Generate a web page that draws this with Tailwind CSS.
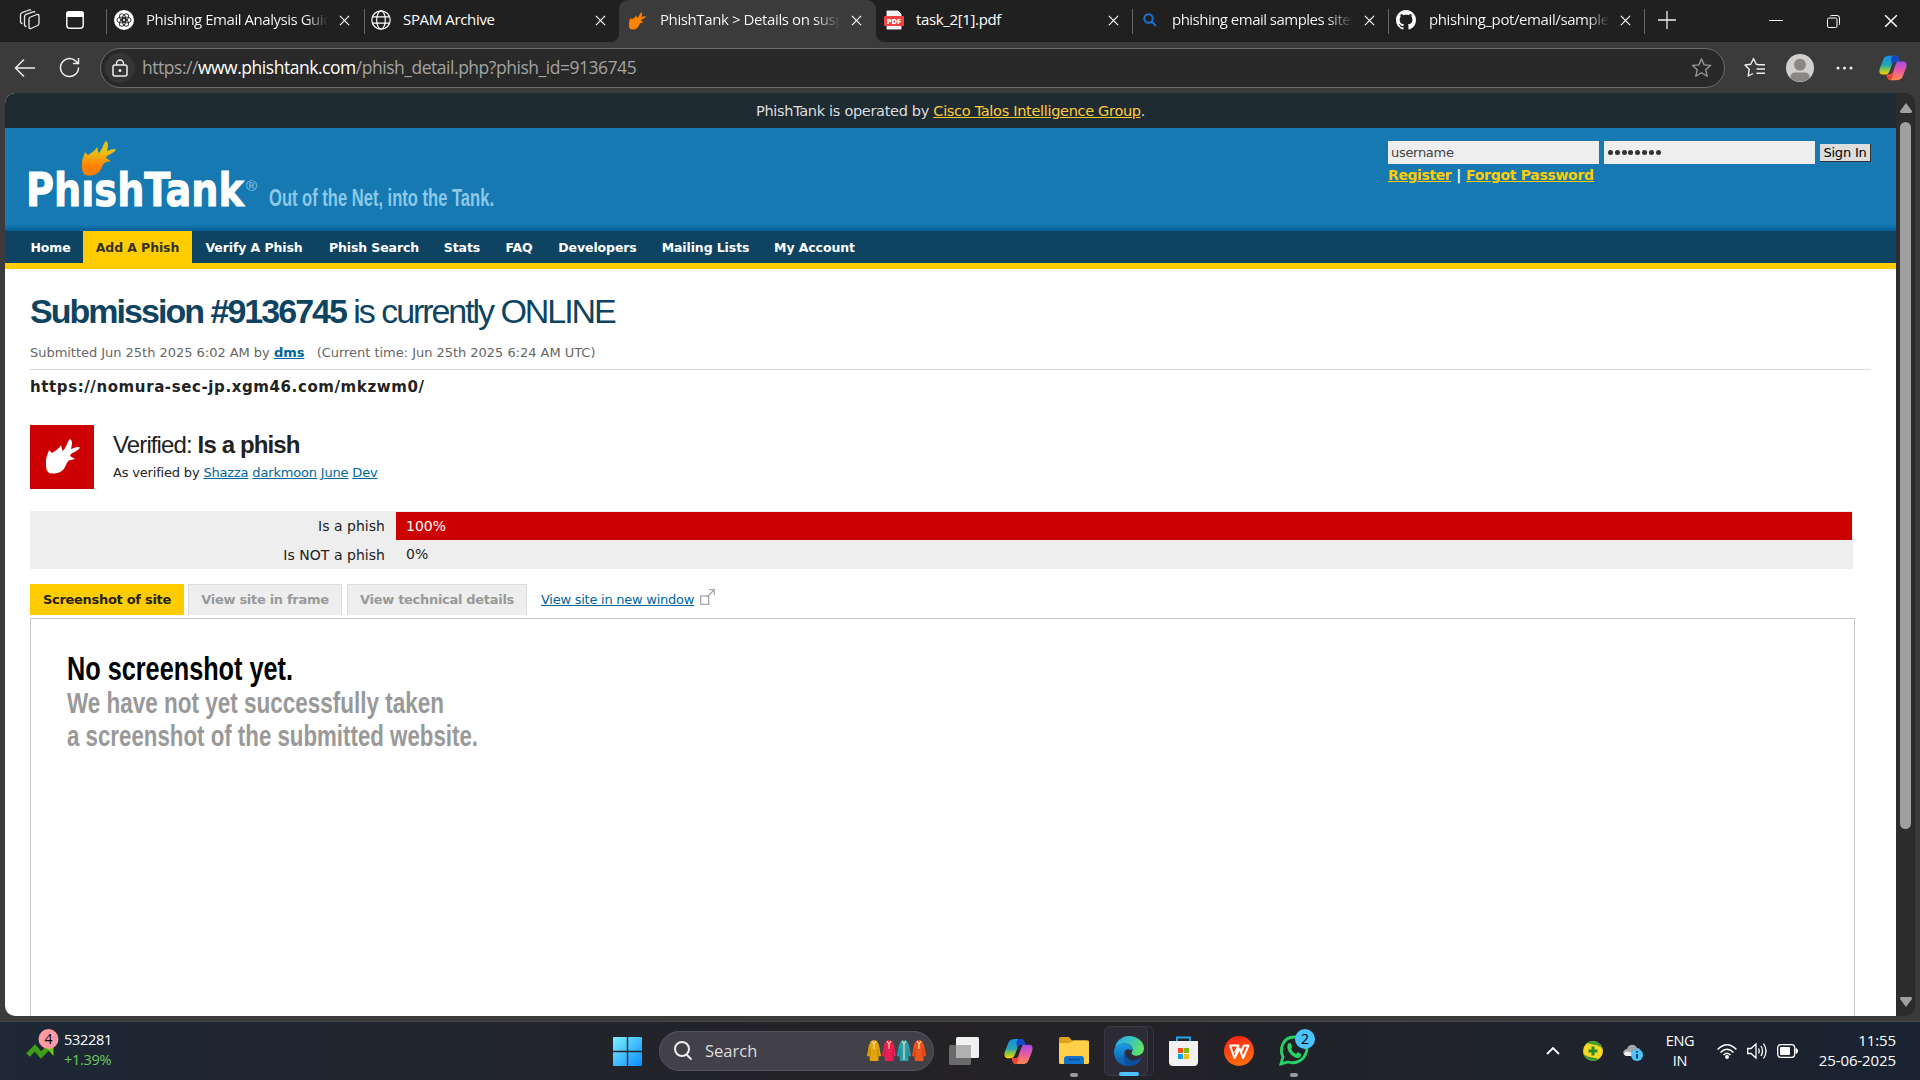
<!DOCTYPE html>
<html lang="en">
<head>
<meta charset="utf-8">
<title>PhishTank &gt; Details on suspected phish #9136745</title>
<script src="https://cdn.jsdelivr.net/npm/@tailwindcss/browser@4"></script>
</head>
<body class="w-[1920px] h-[1080px] overflow-hidden flex flex-col bg-[#3b3b3b] font-['Open_Sans',sans-serif]">

<svg class="absolute w-0 h-0">
  <defs>
    <symbol id="x" viewBox="0 0 12 12"><path d="M1 1L11 11M11 1L1 11" stroke="currentColor" stroke-width="1.3" fill="none"/></symbol>
    <symbol id="fish" viewBox="0 0 34 35"><path d="M0 24C0 17 2 15 3 11L6 14C9 12 13 10 15 6L16.500 12C20 10 21 3 24 0C27 2 26 6 25 10C28 9 31 7 34 8.500C32 12 28 13 25 15L24 17L29 20L23 21.500C20 24 20 28 17 31C13 35 5 35.500 2 33C0 31 0 27 0 24Z" fill="currentColor"/></symbol>
    <linearGradient id="cl" x1="0" y1="0" x2="0" y2="1"><stop offset="0" stop-color="#1592ea"/><stop offset=".5" stop-color="#25a5b5"/><stop offset=".75" stop-color="#8fc73e"/><stop offset="1" stop-color="#ffd000"/></linearGradient>
    <linearGradient id="cr" x1="0" y1="0" x2="0" y2="1"><stop offset="0" stop-color="#a44be8"/><stop offset=".5" stop-color="#ea5aa0"/><stop offset="1" stop-color="#ff8a4a"/></linearGradient>
    <symbol id="copilot" viewBox="0 0 30 30">
      <path d="M12 2H18C20 2 21 4 22 8H18C15 8 14 10 13 14L11 19C10 21 9 22 6 22H4C0 22 0 18 1 15L5 5C6 3 8 2 12 2Z" fill="url(#cl)"/>
      <path d="M15 2H18C20 2 21 4 22 8H18C16 8 15 9 14 11C12 7 13 3 15 2Z" fill="#1747c9"/>
      <path d="M18 28H12C10 28 9 26 8 22H11C14 22 15 20 16 16L18 11C19 8 20 8 23 8H26C30 8 30 12 29 15L25 25C24 27 22 28 18 28Z" fill="url(#cr)"/>
      <path d="M8 22H11C14 22 15 20 16 17L14 26C13 28 12 28.500 11 28C9.500 27 9 25 8 22Z" fill="#e8452c"/>
    </symbol>
  </defs>
</svg>

<!-- Tab strip -->
<div class="h-[42px] shrink-0 flex bg-[#3b3b3b] text-white text-[15px] leading-[39px]">
  <div class="w-[106px] flex items-start bg-[#202020]">
    <svg class="ml-[19px] mt-[9px] w-[22px] h-[22px]" viewBox="0 0 22 22" fill="none" stroke="#e8e8e8" stroke-width="1.3"><path d="M10 10Q10 8.500 11.500 8L18 5.500Q20 5 20 7V14Q20 16 18.500 16.500L12 19.500Q10 20 10 18Z"/><path d="M7.500 17.500Q5.500 17.500 5.500 15.500V8Q5.500 6 7 5.400L14 2.800Q15.700 2.500 16 3.500"/><path d="M3.500 14.500Q1.500 14.500 1.500 12.500V6Q1.500 4.200 3 3.600L10 1Q11.500 .6 12 1.500"/></svg>
    <svg class="ml-[25px] mt-[11px] w-[18px] h-[18px]" viewBox="0 0 18 18"><rect x=".8" y=".8" width="16.400" height="16.400" rx="3" fill="none" stroke="#f2f2f2" stroke-width="1.500"/><path d="M0 6V3Q0 0 3 0H15Q18 0 18 3V6Z" fill="#fff"/></svg>
  </div>
  <div class="w-[258px] flex bg-[#202020]">
    <i class="w-px h-[25px] mt-[9px] bg-[#666]"></i>
    <svg class="ml-[7px] mt-[10px] w-5 h-5 shrink-0" viewBox="0 0 20 20"><circle cx="10" cy="10" r="10" fill="#fff"/><g fill="none" stroke="#222" stroke-width=".9"><ellipse cx="10" cy="7.300" rx="2.800" ry="4.200" transform="rotate(30 10 10)"/><ellipse cx="10" cy="7.300" rx="2.800" ry="4.200" transform="rotate(90 10 10)"/><ellipse cx="10" cy="7.300" rx="2.800" ry="4.200" transform="rotate(150 10 10)"/><ellipse cx="10" cy="7.300" rx="2.800" ry="4.200" transform="rotate(210 10 10)"/><ellipse cx="10" cy="7.300" rx="2.800" ry="4.200" transform="rotate(270 10 10)"/><ellipse cx="10" cy="7.300" rx="2.800" ry="4.200" transform="rotate(330 10 10)"/></g></svg>
    <span class="ml-3 w-[182px] overflow-hidden whitespace-nowrap tracking-[-0.460px] bg-linear-to-r from-white from-88% to-transparent bg-clip-text text-transparent">Phishing Email Analysis Guid</span>
    <svg class="ml-[11px] mt-[15px] w-[11px] h-[11px]"><use href="#x"/></svg>
  </div>
  <div class="w-[255px] flex rounded-br-lg bg-[#202020]">
    <i class="w-px h-[25px] mt-[9px] bg-[#666]"></i>
    <svg class="ml-[6px] mt-[10px] w-5 h-5 shrink-0" viewBox="0 0 20 20" fill="none" stroke="#fff" stroke-width="1.200"><circle cx="10" cy="10" r="9.200"/><ellipse cx="10" cy="10" rx="4.300" ry="9.200"/><path d="M1.500 6.800H18.500M1.500 13.200H18.500"/></svg>
    <span class="ml-3 w-[192px] tracking-[-0.35px]">SPAM Archive</span>
    <svg class="mt-[15px] w-[11px] h-[11px]"><use href="#x"/></svg>
  </div>
  <div class="w-[257px] flex bg-[#202020]"><div class="w-full flex bg-[#3b3b3b] rounded-t-[9px]">
    <svg class="ml-[10px] mt-[12px] w-[17px] h-[18px] shrink-0 text-[#ff8200]"><use href="#fish"/></svg>
    <span class="ml-[14px] w-[181px] overflow-hidden whitespace-nowrap tracking-[-0.400px] bg-linear-to-r from-white from-85% to-transparent bg-clip-text text-transparent">PhishTank &gt; Details on susp</span>
    <svg class="ml-[10px] mt-[15px] w-[11px] h-[11px]"><use href="#x"/></svg>
  </div></div>
  <div class="w-[256px] flex rounded-bl-lg bg-[#202020]">
    <svg class="ml-[8px] mt-[10px] w-[20px] h-[20px] shrink-0" viewBox="0 0 20 20"><path d="M2 0H14L18 4V20H2Z" fill="#f2f2f2" stroke="#111"/><rect y="6" width="20" height="10" rx="1" fill="#f7403f"/><text x="10" y="13.700" font-size="7.500" font-weight="800" fill="#fff" text-anchor="middle" font-family="Open Sans">PDF</text></svg>
    <span class="ml-3 w-[192px] tracking-[-0.350px]">task_2[1].pdf</span>
    <svg class="mt-[15px] w-[11px] h-[11px]"><use href="#x"/></svg>
  </div>
  <div class="w-[256px] flex bg-[#202020]">
    <i class="w-px h-[25px] mt-[9px] bg-[#666]"></i>
    <svg class="ml-[10px] mt-[13px] w-[14px] h-[14px] shrink-0" viewBox="0 0 14 14" fill="none" stroke="#1374d0" stroke-width="2"><circle cx="5.500" cy="5.500" r="4.200"/><path d="M8.500 8.500L13 13"/></svg>
    <span class="ml-[15px] w-[181px] overflow-hidden whitespace-nowrap tracking-[-0.520px] bg-linear-to-r from-white from-85% to-transparent bg-clip-text text-transparent">phishing email samples sites</span>
    <svg class="ml-[11px] mt-[15px] w-[11px] h-[11px]"><use href="#x"/></svg>
  </div>
  <div class="w-[256px] flex bg-[#202020]">
    <i class="w-px h-[25px] mt-[9px] bg-[#666]"></i>
    <svg class="ml-[7px] mt-[10px] w-5 h-5 shrink-0" viewBox="0 0 16 16" fill="#fff"><path d="M8 0C3.580 0 0 3.580 0 8c0 3.540 2.290 6.530 5.470 7.590.4.070.55-.17.55-.38 0-.19-.01-.82-.01-1.490-2.010.37-2.530-.49-2.690-.94-.09-.23-.48-.94-.82-1.130-.28-.15-.68-.52-.01-.53.63-.01 1.080.58 1.230.82.72 1.210 1.870.87 2.330.66.070-.52.28-.87.51-1.070-1.780-.2-3.640-.89-3.640-3.950 0-.87.31-1.590.82-2.150-.08-.2-.36-1.020.08-2.120 0 0 .67-.21 2.200.82.64-.18 1.320-.27 2-.27s1.360.09 2 .27c1.530-1.040 2.200-.82 2.200-.82.44 1.100.16 1.920.08 2.120.51.56.82 1.270.82 2.150 0 3.070-1.870 3.750-3.650 3.950.29.25.54.73.54 1.480 0 1.070-.01 1.930-.01 2.200 0 .21.15.46.55.38A8 8 0 0 0 16 8c0-4.420-3.580-8-8-8"/></svg>
    <span class="ml-[13px] w-[180px] overflow-hidden whitespace-nowrap tracking-[-0.400px] bg-linear-to-r from-white from-88% to-transparent bg-clip-text text-transparent">phishing_pot/email/sample</span>
    <svg class="ml-[11px] mt-[15px] w-[11px] h-[11px]"><use href="#x"/></svg>
  </div>
  <div class="flex-1 flex bg-[#202020]">
    <i class="w-px h-[25px] mt-[9px] bg-[#666]"></i>
    <svg class="ml-[13px] mt-[11px] w-[18px] h-[18px]" viewBox="0 0 18 18"><path d="M9 0V18M0 9H18" stroke="#eee" stroke-width="1.300"/></svg>
    <svg class="ml-[93px] mt-[14px] w-[14px] h-[14px]" viewBox="0 0 14 14"><path d="M0 6.500H14" stroke="#fff"/></svg>
    <svg class="ml-[44px] mt-[15px] w-[13px] h-[13px]" viewBox="0 0 13 13" fill="none" stroke="#fff"><rect x=".5" y="3" width="9.500" height="9.500" rx="1.500"/><path d="M3 1.200Q3.500 .5 4.500 .5H10Q12.500 .5 12.500 3V8.500Q12.500 9.500 11.800 10"/></svg>
    <svg class="ml-[44px] mt-[14px] w-[14px] h-[14px]"><use href="#x"/></svg>
  </div>
</div>

<!-- Toolbar -->
<div class="h-[51px] shrink-0 flex items-center bg-[#3b3b3b]">
  <svg class="ml-[14px] w-[22px] h-[20px]" viewBox="0 0 22 20" fill="none" stroke="#eee" stroke-width="1.500"><path d="M21 10H1.500M10 1.500L1.500 10L10 18.500"/></svg>
  <svg class="ml-[23px] w-[21px] h-[21px]" viewBox="0 0 21 21" fill="none" stroke="#eee" stroke-width="1.500"><path d="M19.500 10.500A9 9 0 1 1 16.500 3.800L19 6.200M19.500 1V6.500H14"/></svg>
  <div class="ml-[20px] w-[1625px] h-10 rounded-full border border-[#6b6b6b] bg-[#292929] flex items-center">
    <div class="ml-[4px] size-[30px] rounded-full bg-[#353535] flex items-center justify-center"><svg class="w-4 h-[18px]" viewBox="0 0 16 18" fill="none" stroke="#eee" stroke-width="1.500"><rect x="1" y="6" width="14" height="11" rx="2"/><path d="M4.500 6V4.500A3.500 3.500 0 0 1 11.500 4.500V6"/><circle cx="8" cy="11.500" r=".8" fill="#eee"/></svg></div>
    <div class="ml-[7px] w-[1549px] text-[17.500px] tracking-[-0.470px] text-[#a3a3a3] whitespace-nowrap">https://<span class="text-white">www.phishtank.com</span>/phish_detail.php?phish_id=9136745</div>
    <svg class="w-[21px] h-[21px]" viewBox="0 0 24 24" fill="none" stroke="#999" stroke-width="1.500"><path d="M12 2L15 9L22.500 9.500L16.800 14.500L18.500 22L12 18L5.500 22L7.200 14.500L1.500 9.500L9 9Z" stroke-linejoin="round"/></svg>
  </div>
  <svg class="ml-[19px] w-[22px] h-[21px]" viewBox="0 0 22 21" fill="none" stroke="#eee" stroke-width="1.400" stroke-linejoin="round"><path d="M14 7.500L12.300 7.200L9.500 1.500L6.800 7.200L1 8L5.200 12.300L4.200 19L9 16.500M14 7.800H21M12.500 12H21M12.500 16.200H21"/></svg>
  <svg class="ml-[20px] size-7" viewBox="0 0 28 28"><circle cx="14" cy="14" r="14" fill="#d2d0ce"/><circle cx="14" cy="10.800" r="6" fill="#8a8886"/><path d="M4.500 24Q4 18.500 9 18.500H19Q24 18.500 23.500 24A14 14 0 0 1 4.500 24Z" fill="#8a8886"/></svg>
  <svg class="ml-[22px] w-[17px] h-[4px]" viewBox="0 0 17 4" fill="#eee"><circle cx="2" cy="2" r="1.500"/><circle cx="8.500" cy="2" r="1.500"/><circle cx="15" cy="2" r="1.500"/></svg>
  <svg class="ml-[26px] size-7"><use href="#copilot"/></svg>
</div>

<!-- Page viewport -->
<div class="h-[923px] ml-[5px] w-[1910px] shrink-0 flex rounded-[10px] overflow-hidden bg-[#2c2c2c] font-['DejaVu_Sans',sans-serif]">
  <div class="w-[1891px] bg-white text-[#222] flex flex-col">
    <div class="h-[35px] shrink-0 bg-[#1f2b33] text-[#ddd] text-[14.500px] leading-[36px] text-center tracking-[-0.310px]">PhishTank is operated by <span class="text-[#fc3] underline">Cisco Talos Intelligence Group</span>.</div>
    <div class="h-[103px] shrink-0 flex justify-between bg-linear-to-b from-[#1679b2] from-94% to-[#045c93]">
      <svg class="w-[520px] h-[100px]" viewBox="5 128 520 100" role="img">
        <defs><linearGradient id="fire" x1="0" y1="0" x2="0" y2="1"><stop offset=".3" stop-color="#e8c117"/><stop offset=".75" stop-color="#ff7f00"/></linearGradient></defs>
        <text x="26" y="206" font-family="DejaVu Sans" font-weight="700" font-size="47" fill="#fff" stroke="#fff" stroke-width="1" textLength="218" lengthAdjust="spacingAndGlyphs">PhıshTank</text>
        <path transform="translate(82 141)" d="M0 24C0 17 2 15 3 11L6 14C9 12 13 10 15 6L16.500 12C20 10 21 3 24 0C27 2 26 6 25 10C28 9 31 7 34 8.500C32 12 28 13 25 15L24 17L29 20L23 21.500C20 24 20 28 17 31C13 35 5 35.500 2 33C0 31 0 27 0 24Z" fill="url(#fire)"/>
        <text x="246" y="191" font-family="Liberation Sans" font-size="15" fill="#8cc8e8">®</text>
        <text x="269" y="206" font-family="Liberation Sans" font-weight="700" font-size="23" fill="#8cc8e8" textLength="225" lengthAdjust="spacingAndGlyphs">Out of the Net, into the Tank.</text>
      </svg>
      <div class="w-[508px] pt-[13px] text-[13px]">
        <div class="flex items-start">
          <div class="w-[211px] h-[23px] bg-[#eee] pl-[3px] leading-[23px] text-[#444] tracking-[-0.300px]">username</div>
          <div class="ml-[5px] w-[211px] h-[23px] bg-[#eee] pl-1 flex items-center gap-[1.800px]"><i class="size-[5px] rounded-full bg-[#333]"></i><i class="size-[5px] rounded-full bg-[#333]"></i><i class="size-[5px] rounded-full bg-[#333]"></i><i class="size-[5px] rounded-full bg-[#333]"></i><i class="size-[5px] rounded-full bg-[#333]"></i><i class="size-[5px] rounded-full bg-[#333]"></i><i class="size-[5px] rounded-full bg-[#333]"></i><i class="size-[5px] rounded-full bg-[#333]"></i></div>
          <div class="ml-[5px] mt-[3px] w-[51px] h-[18px] bg-[#ddd] border-r border-b border-[#333] text-center leading-[17px] text-black whitespace-nowrap tracking-[-0.200px]">Sign In</div>
        </div>
        <div class="mt-[2px] text-[14px] font-bold text-white leading-[18px] whitespace-nowrap tracking-[-0.400px] flex gap-[5px]"><span class="text-[#fc0] underline">Register</span><span>|</span><span class="text-[#fc0] underline tracking-[-0.300px]">Forgot Password</span></div>
      </div>
    </div>
    <div class="h-[38px] shrink-0 bg-[#0e4462] border-b-[6px] border-[#fc0] pl-[13px] flex text-white font-bold text-[12.500px] leading-[33px] tracking-[-0.100px] whitespace-nowrap">
      <span class="w-[65px] text-center">Home</span><span class="w-[109px] h-8 text-center bg-[#fc0] text-[#333]">Add A Phish</span><span class="w-[124px] text-center">Verify A Phish</span><span class="w-[116px] text-center">Phish Search</span><span class="w-[60px] text-center">Stats</span><span class="w-[54px] text-center">FAQ</span><span class="w-[103px] text-center">Developers</span><span class="w-[113px] text-center">Mailing Lists</span><span class="w-[105px] text-center">My Account</span>
    </div>
    <div class="pl-[25px] pr-[25px] flex flex-col">
      <h1 class="mt-[22px] h-[41px] leading-[41px] font-['Liberation_Sans',sans-serif] text-[34px] tracking-[-2.060px] text-[#0e4462]"><b class="tracking-[-1.970px]">Submission #9136745</b> is currently ONLINE</h1>
      <div class="h-[38px] border-b border-[#d8d8d8] pt-[11px] text-[13px] leading-[20px] text-[#666] tracking-[-0.030px] whitespace-pre">Submitted Jun 25th 2025 6:02 AM by <b class="text-[#069] underline">dms</b>   (Current time: Jun 25th 2025 6:24 AM UTC)</div>
      <div class="mt-[7px] h-5 leading-5 text-[15px] font-bold tracking-[0.600px]">https://nomura-sec-jp.xgm46.com/mkzwm0/</div>
      <div class="mt-[28px] flex h-16">
        <div class="size-16 bg-[#c00] pl-[16px] pt-[14px] text-white"><svg class="w-[34px] h-[35px]"><use href="#fish"/></svg></div>
        <div class="ml-[19px]">
          <h3 class="mt-[5px] h-[30px] leading-[30px] font-['Liberation_Sans',sans-serif] text-[24px] tracking-[-0.880px]">Verified: <b>Is a phish</b></h3>
          <p class="mt-[3px] text-[13px] leading-5 tracking-[-0.180px]">As verified by <span class="text-[#069] underline">Shazza</span> <span class="text-[#069] underline">darkmoon</span> <span class="text-[#069] underline">June</span> <span class="text-[#069] underline">Dev</span></p>
        </div>
      </div>
      <div class="mt-[22px] w-[1823px] h-[58px] bg-[#eee] pt-px pr-px text-[14px] leading-7 tracking-[0.030px]">
        <div class="flex"><span class="w-[355px] text-right">Is a phish</span><span class="ml-[11px] flex-1 bg-[#c00] text-white pl-[10px]">100%</span></div>
        <div class="flex leading-[30px]"><span class="w-[355px] text-right">Is NOT a phish</span><span class="ml-[11px] pl-[10px] leading-7">0%</span></div>
      </div>
      <div class="mt-[15px] flex h-[31px] text-[13px] leading-[31px] font-bold text-center tracking-[-0.300px] whitespace-nowrap">
        <span class="w-[154px] bg-[#fc0]">Screenshot of site</span>
        <span class="ml-1 w-[154px] bg-[#eee] border border-b-0 border-[#ddd] text-[#999] leading-[29px]">View site in frame</span>
        <span class="ml-[5px] w-[180px] bg-[#eee] border border-b-0 border-[#ddd] text-[#999] leading-[29px]">View technical details</span>
        <span class="ml-[13px] w-[155px] font-normal text-[#069] underline tracking-[-0.250px]">View site in new window</span>
        <svg class="ml-[5px] mt-[5px] w-[15px] h-4" viewBox="0 0 15 16" fill="none" stroke="#aaa" stroke-width="1.300"><rect x=".7" y="7" width="8" height="8.300"/><path d="M7 8L14 1M9 .7H14.300V6"/></svg>
      </div>
      <div class="mt-[3px] w-[1825px] h-[420px] border border-[#c8c8c8]">
        <svg class="ml-[30px] mt-[25px] w-[440px] h-[110px]" viewBox="61 644 440 110" font-family="Liberation Sans" font-weight="700">
          <text x="67" y="680" font-size="33" textLength="226" lengthAdjust="spacingAndGlyphs" fill="#000">No screenshot yet.</text>
          <text x="67" y="713" font-size="30" textLength="377" lengthAdjust="spacingAndGlyphs" fill="#999">We have not yet successfully taken</text>
          <text x="67" y="746" font-size="30" textLength="411" lengthAdjust="spacingAndGlyphs" fill="#999">a screenshot of the submitted website.</text>
        </svg>
      </div>
    </div>
  </div>
  <div class="w-[19px] flex flex-col items-center">
    <svg class="mt-[10px] w-3 h-[10px]" viewBox="0 0 12 10"><path d="M6 0L12 8Q12 10 11 10H1Q0 10 0 8Z" fill="#a0a0a0"/></svg>
    <div class="mt-[9px] w-[11px] h-[707px] rounded-full bg-[#9f9f9f]"></div>
    <svg class="mt-[168px] w-3 h-[10px]" viewBox="0 0 12 10"><path d="M6 10L12 2Q12 0 11 0H1Q0 0 0 2Z" fill="#a0a0a0"/></svg>
  </div>
</div>

<!-- Taskbar -->
<div class="mt-[5px] h-[59px] shrink-0 flex items-center border-t border-[#474747] bg-linear-to-r from-[#1d2735] via-[#242225] to-[#1a2331] text-white">
  <svg class="ml-[26px] -mt-[7px] w-[34px] h-[40px]" viewBox="26 1027 34 40"><path d="M28 1054L35 1047L41 1054L51 1044" stroke="#3f9d16" stroke-width="5" fill="none"/><path d="M43 1043H53.500V1055Z" fill="#6cc814"/><circle cx="48.500" cy="1038" r="10" fill="#ff99a4"/><text x="48.500" y="1043" font-size="14" text-anchor="middle" font-family="Open Sans">4</text></svg>
  <div class="ml-[4px] -mt-[3px] w-[549px] text-[14.500px] leading-5 tracking-[-0.300px]"><div>532281</div><div class="text-[#6ccb5f]">+1.39%</div></div>
  <svg class="w-[29px] h-[29px]" viewBox="0 0 29 29"><defs><linearGradient id="win" x1="0" y1="0" x2="1" y2="1"><stop stop-color="#7df0ff"/><stop offset="1" stop-color="#0a8cff"/></linearGradient></defs><path d="M0 1Q0 0 1 0H13.800V13.800H0ZM15.200 0H28Q29 0 29 1V13.800H15.200ZM0 15.200H13.800V29H1Q0 29 0 28ZM15.200 15.200H29V28Q29 29 28 29H15.200Z" fill="url(#win)"/></svg>
  <div class="ml-[17px] w-[275px] h-10 rounded-full bg-[#424147] border border-[#55555b] flex items-center">
    <svg class="ml-[13px] w-5 h-[20px]" viewBox="0 0 20 20" fill="none" stroke="#eee" stroke-width="2"><circle cx="9" cy="8" r="7"/><path d="M13.500 13.500L18.500 18.500"/></svg>
    <span class="ml-[12px] w-[162px] text-[16.500px] text-[#ddd]">Search</span>
    <svg class="w-[60px] h-[22px]" viewBox="0 0 60 22"><defs><path id="kurta" d="M4 1L7 0L10 1L12 5L14 16L11.500 16.500L11.500 21H3L2.500 16.500L0 16L2 5Z"/></defs><use href="#kurta" fill="#e3a50d"/><use href="#kurta" x="15" fill="#e91e55"/><use href="#kurta" x="30" fill="#2b9fb0"/><use href="#kurta" x="45" fill="#f0521d"/><path d="M5 1L7 4L9 1M7 4V9M20 1L22 4L24 1M22 4V9M35 1L37 4L39 1M37 4V20M50 1L52 4L54 1M52 4V9" fill="none" stroke="#ffe0a0" stroke-width="1.100"/><path d="M3 9V17M11 9V17M18 9V17M26 9V17M33 9V17M41 9V17M48 9V17M56 9V17" stroke="#000" stroke-opacity=".25" stroke-width=".8"/></svg>
  </div>
  <svg class="ml-[15px] w-[30px] h-[28px]" viewBox="0 0 30 28"><rect x="7" width="23" height="21" rx="1.500" fill="#f1f1f1"/><rect y="8" width="22" height="20" rx="1.500" fill="#6a6a6c"/><rect x="7" y="8" width="15" height="13" fill="#b0b0b0"/></svg>
  <svg class="ml-[25px] size-[29px]"><use href="#copilot"/></svg>
  <div class="ml-[26px] w-[30px] h-[52px] relative">
    <svg class="mt-[12px] w-[30px] h-[27px]" viewBox="0 0 30 27"><path d="M0 1.500Q0 0 1.500 0H10L13 3.500H28V12H0Z" fill="#e0a11b"/><path d="M0 6H11L14 3.500H29Q30 3.500 30 5V25.500Q30 27 28.500 27H1.500Q0 27 0 25.500Z" fill="#ffcf48"/><path d="M5 27V22Q5 19 8 19H22Q25 19 25 22V27Z" fill="#1173cb"/><path d="M9 22.500H21" stroke="#0a4f94" stroke-width="1.500"/></svg>
    <i class="absolute left-[11px] top-[48px] w-2 h-1 rounded-full bg-[#9a9a9a]"></i>
  </div>
  <div class="ml-[15px] w-[50px] h-[50px] rounded-md border border-[#35343e] bg-[#25242d] relative">
    <div class="-ml-px -mt-px w-[44px] h-[50px] rounded-md border border-[#3b3a44] bg-[#2d2c36]">
      <svg class="ml-[9px] mt-[9px] size-[30px]" viewBox="0 0 32 32"><defs><linearGradient id="e1" x1="0" y1="0" x2="1" y2=".3"><stop stop-color="#2aa7ea"/><stop offset=".5" stop-color="#35c1c8"/><stop offset="1" stop-color="#5de06a"/></linearGradient><linearGradient id="e2" x1="0" y1="0" x2="0" y2="1"><stop stop-color="#1b9de2"/><stop offset="1" stop-color="#0d56a6"/></linearGradient></defs><path d="M1 13C2 5 9 0 16 0C25 0 32 6 32 13C32 18 28 21 24 21C20 21 18 19 19 17C21 15 20 11 16 9C11 7 4 8 1 13Z" fill="url(#e1)"/><path d="M0 17C0 11 5 8 10 8C16 8 20 12 20 15C20 16 18 14 15 14C10 14 9 22 14 27C17 30 20 31 21 31C9 35 0 27 0 17Z" fill="url(#e2)"/><path d="M14 14C10 19 14 25 20 26C25 26 28 24 30 23C28 28 23 32 18 32C10 31 8 19 14 14Z" fill="#0c4fa0"/></svg>
    </div>
    <i class="absolute left-[14px] top-[45px] w-5 h-1 rounded-full bg-[#4cc2ff]"></i>
  </div>
  <svg class="ml-[15px] w-[29px] h-[30px]" viewBox="0 0 29 30"><path d="M8 6V1.500H21V6" fill="none" stroke="#22a6ee" stroke-width="2"/><path d="M0 5H29V26Q29 30 25 30H4Q0 30 0 26Z" fill="#f2f2f2"/><path fill="#f25022" d="M9 12H14V17H9Z"/><path fill="#7fba00" d="M15 12H20V17H15Z"/><path fill="#00a4ef" d="M9 18H14V23H9Z"/><path fill="#ffb900" d="M15 18H20V23H15Z"/></svg>
  <svg class="ml-[26px] size-[30px]" viewBox="0 0 30 30"><defs><linearGradient id="wps" x1="0" y1="0" x2=".3" y2="1"><stop stop-color="#ff1c1c"/><stop offset="1" stop-color="#ff6a0a"/></linearGradient></defs><circle cx="15" cy="15" r="15" fill="url(#wps)"/><path d="M10.500 9.500H6L10.500 22L15.500 12.500L19 22L24.500 9.500H20L16.500 17M9.500 9.500H14.500L11 17" fill="none" stroke="#fff" stroke-width="2" stroke-linejoin="round"/></svg>
  <div class="ml-[25px] w-[38px] h-[52px] relative">
    <svg class="mt-[10px] w-[30px] h-[31px]" viewBox="0 0 30 31"><path d="M2 29L4 22C0 14 4 2 15 2C25 2 30 11 27 18C24 27 15 29 9 27Z" fill="none" stroke="#25d366" stroke-width="2.800"/><path d="M9 9Q11 7 12 9L13 12L12 14Q14 18 17 19L19 17L22 19Q23 22 19 23C14 23 6 15 9 9Z" fill="#25d366"/></svg>
    <i class="absolute left-[16px] top-[4px] size-5 rounded-full bg-[#4cc2ff] text-black text-[14px] leading-5 not-italic text-center">2</i>
    <i class="absolute left-[11px] top-[48px] w-2 h-1 rounded-full bg-[#9a9a9a]"></i>
  </div>
  <svg class="ml-[229px] w-[14px] h-2" viewBox="0 0 14 8"><path d="M1 7L7 1L13 7" fill="none" stroke="#fff" stroke-width="1.800"/></svg>
  <svg class="ml-[23px] size-5" viewBox="0 0 20 20"><circle cx="10" cy="10" r="10" fill="#f8d820"/><path d="M4 2A10 10 0 0 1 19.500 8Q17 4 10 3.500ZM16 18A10 10 0 0 1 .5 13Q4 16 10 16.500Z" fill="#3a9b35"/><path d="M10 5.500V14.500M5.500 10H14.500" stroke="#278a2e" stroke-width="3"/></svg>
  <svg class="ml-[20px] mt-[3px] w-[20px] h-[17px]" viewBox="0 0 20 17"><path d="M4 12C-2 11 0 5 4 5C5 0 12-1 14 4C19 4 19 12 14 12Z" fill="#a5a5a5"/><path d="M1 9Q5 5 12 12H4Q1 12 1 9Z" fill="#eee"/><circle cx="14" cy="11" r="6" fill="#4cc2ff"/><path d="M14 10V14.500M14 7V8.500" stroke="#123" stroke-width="1.600"/></svg>
  <div class="ml-[22px] -mt-px w-[30px] text-center text-[14.500px] leading-5 tracking-[-0.300px]">ENG<br>IN</div>
  <svg class="ml-[22px] w-[20px] h-[15px]" viewBox="0 0 20 15" fill="none" stroke="#fff" stroke-width="1.500"><path d="M.6 5.500Q10-4 19.400 5.500M3.500 8.500Q10 2 16.500 8.500M6.500 11Q10 7.500 13.500 11"/><circle cx="10" cy="13" r="1.200" fill="#fff"/></svg>
  <svg class="ml-[10px] w-[20px] h-[18px]" viewBox="0 0 20 18" fill="none" stroke="#fff" stroke-width="1.300"><path d="M.7 6.500H4L9 2V16L4 11.500H.7ZM11.500 6.500Q13 9 11.500 11.500M14 4Q17 9 14 14M16.500 1.500Q21.500 9 16.500 16.500"/></svg>
  <svg class="ml-[10px] w-[21px] h-[14px]" viewBox="0 0 21 14"><rect x=".7" y=".7" width="17" height="12.600" rx="3" fill="none" stroke="#fff" stroke-width="1.300"/><rect x="3" y="3" width="10" height="8" rx="1" fill="#fff"/><path d="M19 4.500Q20.500 5 20.500 7Q20.500 9 19 9.500Z" fill="#fff" stroke="#fff"/></svg>
  <div class="ml-auto mr-[24px] -mt-[3px] text-right text-[15px] leading-5 tracking-[-0.100px]">11:55<br>25-06-2025</div>
</div>
</body>
</html>
